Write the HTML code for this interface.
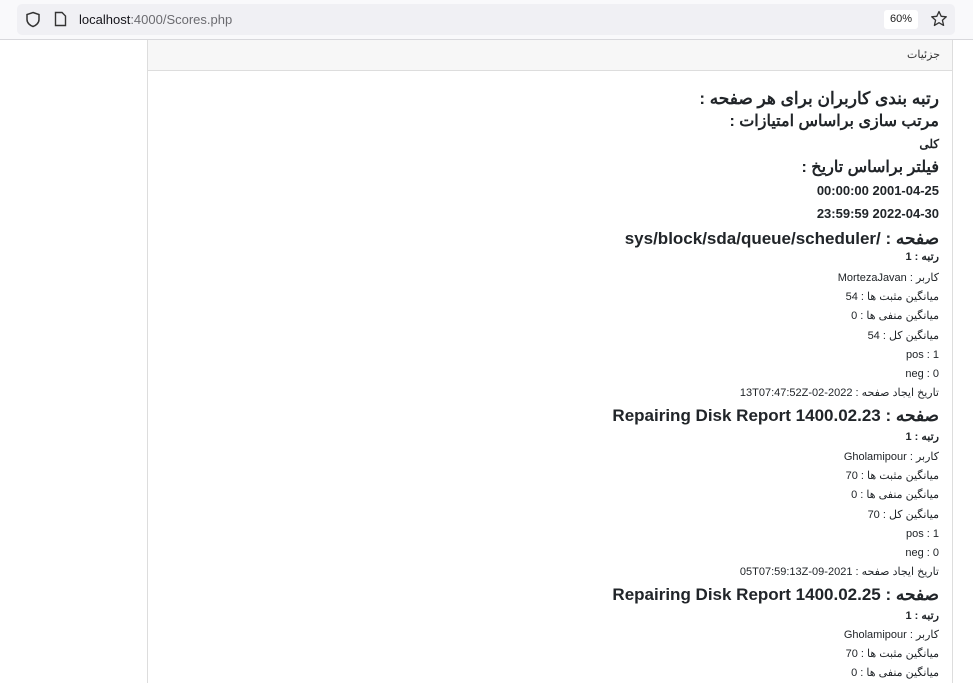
<!DOCTYPE html>
<html><head><meta charset="utf-8">
<style>
html,body{margin:0;width:973px;height:683px;overflow:hidden}
body{background:#fff;font-family:"Liberation Sans","Noto Sans CJK SC",sans-serif;position:relative}
.bar{position:absolute;left:0;top:0;width:973px;height:39px;background:#f9f9fb;border-bottom:1px solid #d8d8dc}
.url{position:absolute;left:17px;top:4px;width:938px;height:31px;background:#f0f0f4;border-radius:5px}
.u{position:absolute;left:79px;top:12px;font-size:13px;color:#15141a}
.u span{color:#6b6b70}
.zoom{position:absolute;left:884px;top:10px;width:34px;height:19px;background:#fff;border-radius:3px;font-size:11px;text-align:center;line-height:19px;color:#222}
.card{position:absolute;left:147px;top:40px;width:804px;height:643px;border-left:1px solid #ddd;border-right:1px solid #ddd}
.hd{position:absolute;left:0;top:0;width:804px;height:30px;background:#f7f7f7;border-bottom:1px solid #ddd}
.hd div{position:absolute;right:12px;top:8px;font-size:11px;color:#333;direction:rtl}
.l{position:absolute;right:34px;direction:rtl;text-align:right;white-space:nowrap;color:#212529;line-height:1}
</style></head><body>
<div class="bar"><div class="url"></div>
<svg style="position:absolute;left:25px;top:11px" width="16" height="17" viewBox="0 0 16 17"><path d="M8 1.5L14 3.5V8.5C14 12 11 14.5 8 15.5C5 14.5 2 12 2 8.5V3.5Z" fill="none" stroke="#333" stroke-width="1.5"/></svg>
<svg style="position:absolute;left:54px;top:11px" width="13" height="16" viewBox="0 0 13 16"><path d="M1.5 1.5H8L11.5 5V14.5H1.5Z" fill="none" stroke="#333" stroke-width="1.4"/></svg>
<div class="u">localhost<span>:4000/Scores.php</span></div>
<div class="zoom">60%</div>
<svg style="position:absolute;left:930px;top:10px" width="18" height="18" viewBox="0 0 18 18"><path d="M9 1.5L11.2 6.3L16.3 6.8L12.4 10.2L13.6 15.4L9 12.7L4.4 15.4L5.6 10.2L1.7 6.8L6.8 6.3Z" fill="none" stroke="#333" stroke-width="1.3" stroke-linejoin="round"/></svg>
</div>
<div class="card"><div class="hd"><div>جزئیات</div></div></div>

<div class="l" style="top:90px;font-size:17px;font-weight:bold">رتبه بندی کاربران برای هر صفحه :</div>
<div class="l" style="top:114px;font-size:16px;font-weight:bold">مرتب سازی براساس امتیازات :</div>
<div class="l" style="top:138px;font-size:12px;font-weight:bold">کلی</div>
<div class="l" style="top:160px;font-size:16px;font-weight:bold">فیلتر براساس تاریخ :</div>
<div class="l" style="top:184px;font-size:13px;font-weight:bold">2001-04-25 00:00:00</div>
<div class="l" style="top:207px;font-size:13px;font-weight:bold">2022-04-30 23:59:59</div>

<div class="l" style="top:230px;font-size:17px;font-weight:bold">صفحه : /sys/block/sda/queue/scheduler</div>
<div class="l" style="top:252px;font-size:11px;font-weight:bold">رتبه : 1</div>
<div class="l" style="top:273px;font-size:11px">کاربر : MortezaJavan</div>
<div class="l" style="top:292px;font-size:11px">میانگین مثبت ها : 54</div>
<div class="l" style="top:311px;font-size:11px">میانگین منفی ها : 0</div>
<div class="l" style="top:331px;font-size:11px">میانگین کل : 54</div>
<div class="l" style="top:350px;font-size:11px">pos : 1</div>
<div class="l" style="top:369px;font-size:11px">neg : 0</div>
<div class="l" style="top:388px;font-size:11px">تاریخ ایجاد صفحه : 2022-02-13T07:47:52Z</div>

<div class="l" style="top:407px;font-size:17px;font-weight:bold">صفحه : Repairing Disk Report 1400.02.23</div>
<div class="l" style="top:432px;font-size:11px;font-weight:bold">رتبه : 1</div>
<div class="l" style="top:452px;font-size:11px">کاربر : Gholamipour</div>
<div class="l" style="top:471px;font-size:11px">میانگین مثبت ها : 70</div>
<div class="l" style="top:490px;font-size:11px">میانگین منفی ها : 0</div>
<div class="l" style="top:510px;font-size:11px">میانگین کل : 70</div>
<div class="l" style="top:529px;font-size:11px">pos : 1</div>
<div class="l" style="top:548px;font-size:11px">neg : 0</div>
<div class="l" style="top:567px;font-size:11px">تاریخ ایجاد صفحه : 2021-09-05T07:59:13Z</div>

<div class="l" style="top:586px;font-size:17px;font-weight:bold">صفحه : Repairing Disk Report 1400.02.25</div>
<div class="l" style="top:611px;font-size:11px;font-weight:bold">رتبه : 1</div>
<div class="l" style="top:630px;font-size:11px">کاربر : Gholamipour</div>
<div class="l" style="top:649px;font-size:11px">میانگین مثبت ها : 70</div>
<div class="l" style="top:668px;font-size:11px">میانگین منفی ها : 0</div>
</body></html>
